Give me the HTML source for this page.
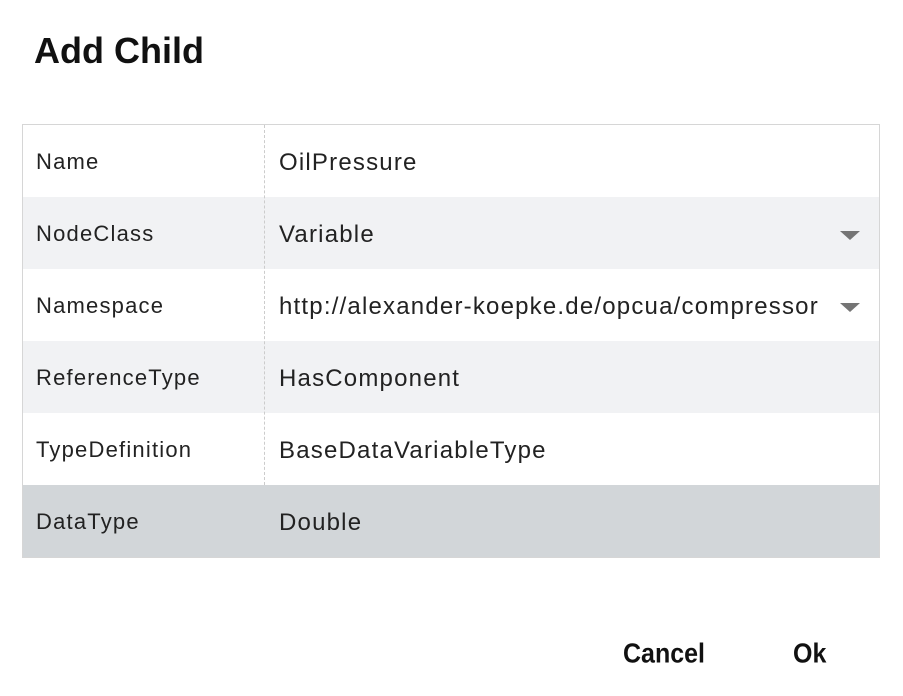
<!DOCTYPE html>
<html><head><style>
body{margin:0;width:903px;height:696px;background:#fff;font-family:"Liberation Sans",sans-serif;position:relative;overflow:hidden}
.t{position:absolute;left:34px;top:30px;font-size:36px;font-weight:bold;color:#111}
.tbl{position:absolute;left:22px;top:124px;width:856px;height:432px;border:1px solid #d6d6d6}
.r{position:absolute;left:0;width:856px;height:72px}
.l{position:absolute;left:13px;top:1px;line-height:72px;font-size:22px;letter-spacing:1.2px;color:#222}
.v{position:absolute;left:256px;top:2px;line-height:72px;font-size:24px;letter-spacing:1.2px;color:#222}
.div{position:absolute;left:241px;top:0;height:360px;border-left:1px dashed #ccc}
.a{position:absolute;left:817px;top:34px;width:0;height:0;border-left:10px solid transparent;border-right:10px solid transparent;border-top:9px solid #757575}
.b{position:absolute;top:640px;font-size:25px;font-weight:bold;color:#111;transform:scaleY(1.1)}
</style></head><body>
<div class="t">Add Child</div>
<div class="tbl">
<div class="r" style="top:0;background:#fff"><span class="l">Name</span><span class="v">OilPressure</span></div>
<div class="r" style="top:72px;background:#f1f2f4"><span class="l">NodeClass</span><span class="v">Variable</span><div class="a"></div></div>
<div class="r" style="top:144px;background:#fff"><span class="l">Namespace</span><span class="v">http://alexander-koepke.de/opcua/compressor</span><div class="a"></div></div>
<div class="r" style="top:216px;background:#f1f2f4"><span class="l">ReferenceType</span><span class="v">HasComponent</span></div>
<div class="r" style="top:288px;background:#fff"><span class="l">TypeDefinition</span><span class="v">BaseDataVariableType</span></div>
<div class="r" style="top:360px;background:#d2d6d9"><span class="l">DataType</span><span class="v">Double</span></div>
<div class="div"></div>
</div>
<div class="b" style="left:623px">Cancel</div>
<div class="b" style="left:793px">Ok</div>
</body></html>
